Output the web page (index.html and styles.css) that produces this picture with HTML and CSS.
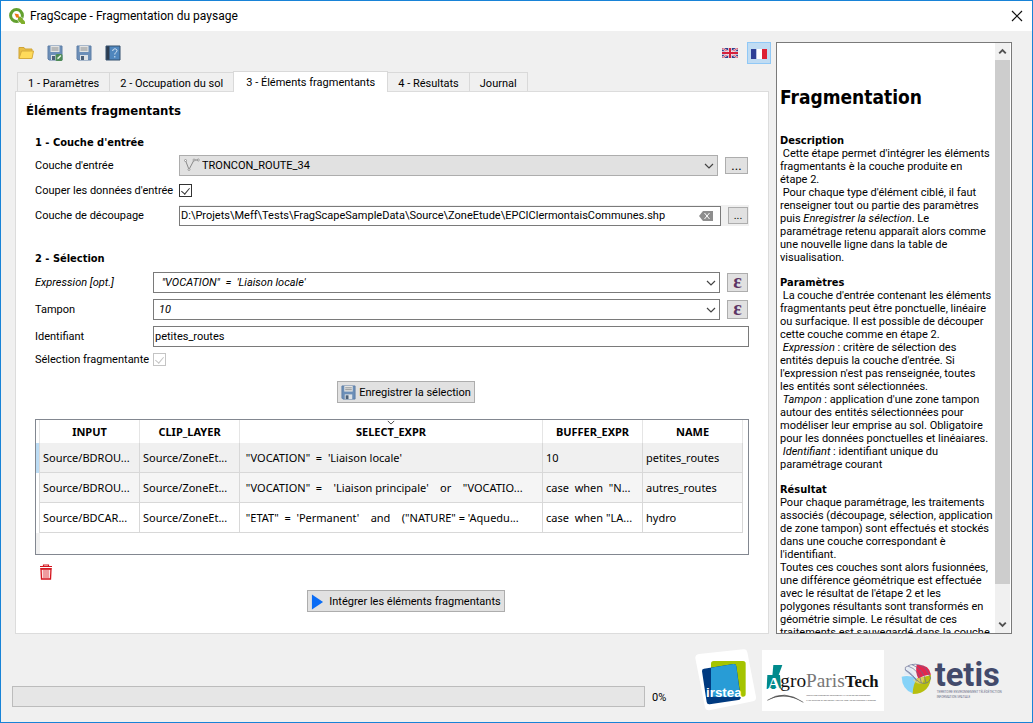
FILE: index.html
```html
<!DOCTYPE html>
<html lang="fr">
<head>
<meta charset="utf-8">
<title>FragScape - Fragmentation du paysage</title>
<link rel="stylesheet" href="styles.css">
</head>
<body>
<svg class="defs" aria-hidden="true">
  <symbol id="disk" viewBox="0 0 16 16">
    <path d="M1 1h14v14H2l-1-1z" fill="#6c8fb8" stroke="#5f7fa6"/>
    <path d="M3.500 1h9v6h-9z" fill="#e4e4e2"/>
    <path d="M4.500 3h7M4.500 5h7" stroke="#8b8f92"/>
    <path d="M4 10h8v5H4z" fill="#dfe3e6"/>
    <path d="M5 11h3v4H5z" fill="#4b6078"/>
  </symbol>
  <symbol id="chevron" viewBox="0 0 10 6">
    <path d="M1 1l4 4 4-4" fill="none" stroke="#444" stroke-width="1.200"/>
  </symbol>
</svg>
<div class="window">
  <header class="titlebar">
    <svg class="app-icon" viewBox="0 0 16 16" aria-hidden="true">
      <circle cx="7.500" cy="7.500" r="5.900" fill="none" stroke="#62a02f" stroke-width="3"/>
      <path d="M9 9l2-.5 5 5V16h-3.500L9 12z" fill="#7fae2b"/>
      <path d="M8.500 12l3 4M11.500 8.500l4.500 3.500" stroke="#fff" stroke-width=".6"/>
      <path d="M5.500 5.500l4 .8.700 3.500-3-.3z" fill="#ee7913"/>
    </svg>
    <span class="title">FragScape - Fragmentation du paysage</span>
    <button class="close" type="button" aria-label="Fermer">
      <svg viewBox="0 0 12 12"><path d="M1 1l10 10M11 1L1 11" stroke="#111" stroke-width="1.200"/></svg>
    </button>
  </header>

  <main class="main">
    <section class="left">
      <div class="toolbar">
        <button class="tool" type="button" aria-label="Ouvrir">
          <svg viewBox="0 0 16 16"><path d="M1 13.500V2.500h5l1 1.500h7v2" fill="#e9bf45" stroke="#d0a436"/><path d="M1 13.500L3.500 6H15.500l-1.500 7.500z" fill="#ffdb5a" stroke="#d5ab3d"/></svg>
        </button>
        <button class="tool" type="button" aria-label="Enregistrer sous">
          <svg viewBox="0 0 16 16"><use href="#disk"/><rect x="8.500" y="9" width="7" height="7" rx="1.500" fill="#4e8b57"/><path d="M10.200 14.300l.5-1.800 2.700-2.500 1 1-2.600 2.700z" fill="#e8f2e8"/></svg>
        </button>
        <button class="tool" type="button" aria-label="Enregistrer">
          <svg viewBox="0 0 16 16"><use href="#disk"/></svg>
        </button>
        <button class="tool" type="button" aria-label="Aide">
          <svg viewBox="0 0 16 16"><path d="M1 1h14v14H1z" fill="#4f86bd"/><path d="M1 1h3.500v14H1z" fill="#2c3c50"/><path d="M1 1h14v14H1z" fill="none" stroke="#34506f"/><path d="M7.700 6c0-3 4.600-2.700 4.300-.2-.2 1.500-2.200 1.700-2.200 3.700M9.800 11v1.500" fill="none" stroke="#dbe8f5" stroke-width="1"/></svg>
        </button>
        <span class="spacer"></span>
        <button class="flag" type="button" aria-label="English">
          <svg viewBox="0 0 32 20"><path d="M0 0h32v20H0z" fill="#34408c"/><path d="M0 0l32 20M32 0L0 20" stroke="#f3e9ee" stroke-width="4"/><path d="M0 0l32 20M32 0L0 20" stroke="#d5203c" stroke-width="1.500"/><path d="M16 0v20M0 10h32" stroke="#f3e9ee" stroke-width="7"/><path d="M16 0v20M0 10h32" stroke="#d5203c" stroke-width="4"/></svg>
        </button>
        <button class="flag flag-on" type="button" aria-label="Français" aria-pressed="true">
          <svg viewBox="0 0 32 20"><path d="M0 0h11v20H0z" fill="#2f4096"/><path d="M11 0h11v20H11z" fill="#fff"/><path d="M22 0h10v20H22z" fill="#dd2033"/></svg>
        </button>
      </div>

      <div class="tabs" role="tablist">
        <button class="tab" role="tab" type="button">1 - Paramètres</button>
        <button class="tab" role="tab" type="button">2 - Occupation du sol</button>
        <button class="tab tab-on" role="tab" type="button" aria-selected="true">3 - Éléments fragmentants</button>
        <button class="tab" role="tab" type="button">4 - Résultats</button>
        <button class="tab" role="tab" type="button">Journal</button>
      </div>

      <div class="panel" role="tabpanel">
        <h1 class="panel-title">Éléments fragmentants</h1>

        <form class="form">
          <h2 class="group-title">1 - Couche d'entrée</h2>
          <div class="row row-input">
            <label for="layer">Couche d'entrée</label>
            <div class="combo combo-grey">
              <svg class="line-icon" viewBox="0 0 16 14" aria-hidden="true"><path d="M1.500 2.500L5 11.500 10 2h4" fill="none" stroke="#888"/><g fill="#fff" stroke="#888" stroke-width=".8"><circle cx="1.500" cy="2.500" r="1"/><circle cx="5" cy="11.500" r="1"/><circle cx="10" cy="2" r="1"/><circle cx="14.300" cy="2" r="1"/></g></svg>
              <select id="layer"><option>TRONCON_ROUTE_34</option></select>
              <svg class="arrow" aria-hidden="true"><use href="#chevron"/></svg>
            </div>
            <button class="btn browse" type="button" aria-label="Parcourir les couches">...</button>
          </div>
          <div class="row row-input">
            <label for="clip">Couper les données d'entrée</label>
            <input class="check" id="clip" type="checkbox" checked>
          </div>
          <div class="row row-input">
            <label for="clip-layer">Couche de découpage</label>
            <div class="file">
              <div class="file-field">
                <input class="text" id="clip-layer" type="text" value="D:\Projets\Meff\Tests\FragScapeSampleData\Source\ZoneEtude\EPCIClermontaisCommunes.shp">
                <button class="clear" type="button" aria-label="Effacer"><svg viewBox="0 0 14 10"><path d="M4 0h10v10H4L0 5z" fill="#8e8e8e"/><path d="M5.500 2l5 6M10.500 2l-5 6" stroke="#fff"/></svg></button>
              </div>
              <button class="btn browse-file" type="button" aria-label="Parcourir les fichiers">...</button>
            </div>
          </div>

          <h2 class="group-title group-second">2 - Sélection</h2>
          <div class="row row-select">
            <label class="optional" for="expr">Expression [opt.]</label>
            <div class="combo combo-expr">
              <select id="expr"><option>&nbsp;"VOCATION"&nbsp; =&nbsp; 'Liaison locale'</option></select>
              <svg class="arrow" aria-hidden="true"><use href="#chevron"/></svg>
            </div>
            <button class="btn epsilon" type="button" aria-label="Éditer l'expression">ε</button>
          </div>
          <div class="row row-select">
            <label for="buffer">Tampon</label>
            <div class="combo combo-expr">
              <select id="buffer"><option>10</option></select>
              <svg class="arrow" aria-hidden="true"><use href="#chevron"/></svg>
            </div>
            <button class="btn epsilon" type="button" aria-label="Éditer le tampon">ε</button>
          </div>
          <div class="row row-select">
            <label for="name">Identifiant</label>
            <input class="text" id="name" type="text" value="petites_routes">
          </div>
          <div class="row row-select row-short">
            <label for="frag">Sélection fragmentante</label>
            <input class="check" id="frag" type="checkbox" checked disabled>
          </div>

          <button class="btn action save" type="button"><svg viewBox="0 0 16 16" aria-hidden="true"><use href="#disk"/></svg>Enregistrer la sélection</button>

          <div class="table-box">
            <table class="table">
              <colgroup><col class="c-head"><col class="c-std"><col class="c-std"><col><col class="c-std"><col class="c-std"></colgroup>
              <thead>
                <tr><td></td><th>INPUT</th><th>CLIP_LAYER</th><th class="sorted">SELECT_EXPR<svg class="sort" aria-hidden="true"><use href="#chevron"/></svg></th><th>BUFFER_EXPR</th><th>NAME</th></tr>
              </thead>
              <tbody>
                <tr class="current"><td class="mark"></td><td>Source/BDROU...</td><td>Source/ZoneEt...</td><td>&nbsp;"VOCATION"&nbsp; =&nbsp; 'Liaison locale'</td><td>10</td><td>petites_routes</td></tr>
                <tr class="alt"><td class="mark"></td><td>Source/BDROU...</td><td>Source/ZoneEt...</td><td>&nbsp;"VOCATION"&nbsp; =&nbsp; &nbsp; 'Liaison principale'&nbsp; &nbsp; or&nbsp; &nbsp; "VOCATIO...</td><td>case&nbsp; when&nbsp; "N...</td><td>autres_routes</td></tr>
                <tr><td class="mark"></td><td>Source/BDCAR...</td><td>Source/ZoneEt...</td><td>&nbsp;"ETAT"&nbsp; =&nbsp; 'Permanent'&nbsp; &nbsp; and&nbsp; &nbsp; ("NATURE" = 'Aquedu...</td><td>case&nbsp; when "LA...</td><td>hydro</td></tr>
              </tbody>
            </table>
          </div>

          <button class="trash" type="button" aria-label="Supprimer">
            <svg viewBox="0 0 14 16"><path d="M4.500 2V1h5v1M1 2.500h12" fill="none" stroke="#d4151e" stroke-width="1.200"/><path d="M2 5h10l-.5 10h-9z" fill="#fde3e3" stroke="#d4151e" stroke-width="1.300"/><path d="M1.300 4.700h11.400" stroke="#d4151e" stroke-width="1.100"/><path d="M5 6v8M7 6v8M9 6v8" stroke="#d4151e" stroke-width=".7"/></svg>
          </button>

          <button class="btn action run" type="button"><svg viewBox="0 0 14 16" aria-hidden="true"><path d="M1 0l12 8-12 8z" fill="#0a6cf5"/></svg>Intégrer les éléments fragmentants</button>
        </form>
      </div>
    </section>

    <aside class="help">
      <div class="help-text">
        <h1>Fragmentation</h1>
        <h2>Description</h2>
        <p>&nbsp;Cette étape permet d'intégrer les éléments fragmentants è la couche produite en<br>étape 2.</p>
        <p>&nbsp;Pour chaque type d'élément ciblé, il faut renseigner tout ou partie des paramètres puis <i>Enregistrer la sélection</i>. Le<br>paramétrage retenu apparaît alors comme<br>une nouvelle ligne dans la table de<br>visualisation.</p>
        <h2>Paramètres</h2>
        <p>&nbsp;La couche d'entrée contenant les éléments fragmentants peut être ponctuelle, linéaire<br>ou surfacique. Il est possible de découper cette couche comme en étape 2.</p>
        <p>&nbsp;<i>Expression</i> : critère de sélection des<br>entités depuis la couche d'entrée. Si<br>l'expression n'est pas renseignée, toutes<br>les entités sont sélectionnées.</p>
        <p>&nbsp;<i>Tampon</i> : application d'une zone tampon autour des entités sélectionnées pour modéliser leur emprise au sol. Obligatoire<br>pour les données ponctuelles et linéaiares.</p>
        <p>&nbsp;<i>Identifiant</i> : identifiant unique du<br>paramétrage courant</p>
        <h2>Résultat</h2>
        <p>Pour chaque paramétrage, les traitements associés (découpage, sélection, application<br>de zone tampon) sont effectués et stockés dans une couche correspondant è<br>l'identifiant.</p>
        <p>Toutes ces couches sont alors fusionnées, une différence géométrique est effectuée<br>avec le résultat de l'étape 2 et les<br>polygones résultants sont transformés en<br>géométrie simple. Le résultat de ces<br>traitements est sauvegardé dans la couche</p>
      </div>
      <div class="scroll" aria-hidden="true">
        <svg viewBox="0 0 16 17"><path d="M4.500 10.500L8 7l3.500 3.500" fill="none" stroke="#505050" stroke-width="2"/></svg>
        <div class="thumb"></div>
        <svg viewBox="0 0 16 17"><path d="M4.500 6.500L8 10l3.500-3.500" fill="none" stroke="#505050" stroke-width="2"/></svg>
      </div>
    </aside>
  </main>

  <footer class="footer">
    <progress class="progress" id="prog" value="0" max="100"></progress>
    <label class="percent" for="prog">0%</label>
    <svg class="logo-irstea" viewBox="45 28 186 186" role="img" aria-label="irstea">
      <path d="M57 43L190 29q10-1 12 9l26 134q1 11-9 13L88 212q-11 1-13-9L46 56q-1-11 11-13z" fill="#fff"/>
      <rect x="93" y="64" width="104" height="107" rx="8" fill="#a5c400"/>
      <path d="M72 87l88-14q8-1 9 7l13 92q1 8-7 9l-86 13q-8 1-9-7L66 95q-1-7 6-8z" fill="#003a80"/>
      <path d="M93 84l67-11q8-1 9 7l12 91H101q-8 0-8-8z" fill="#289cd6"/>
      <text x="78" y="171" class="t-irstea">irstea</text>
    </svg>
    <svg class="logo-agro" viewBox="246 30 366 183" role="img" aria-label="AgroParisTech">
      <path d="M246 30h366v183H246z" fill="#fff"/>
      <path d="M280 75h27l-12 33h-18z" fill="#008a8c"/>
      <path d="M262 105h38l3 42h-43z" fill="#008a8c"/>
      <text x="263" y="147" class="t-a">A</text>
      <text x="301" y="142" class="t-gro">gro</text>
      <text x="378" y="142" class="t-paris">Paris</text>
      <text x="495" y="142" class="t-tech">Tech</text>
      <path d="M262 181q50-34 108 6-56-32-108-6z" fill="#555"/>
      <path d="M262 181q50-34 108 6" fill="none" stroke="#444" stroke-width="2"/>
      <text x="379" y="167" class="t-tiny">INSTITUT DES SCIENCES ET INDUSTRIES DU VIVANT ET DE L'ENVIRONNEMENT</text>
      <text x="379" y="183" class="t-tiny">PARIS INSTITUTE OF TECHNOLOGY FOR LIFE, FOOD AND ENVIRONMENTAL SCIENCES</text>
    </svg>
    <svg class="logo-tetis" viewBox="60 60 306 126" role="img" aria-label="tetis">
      <path d="M65 110q20-6 45 4l-12 46q-32-12-33-50z" fill="#86d3f8"/>
      <path d="M72 104q2-16 16-26l24 36q-20-10-40-10z" fill="#e4ecf5"/>
      <path d="M112 114q26-4 41-10 0 56-55 58 0-28 14-48z" fill="#b7bf10"/>
      <path d="M110 74q38-2 43 30-20 0-38 12-10-20-5-42z" fill="#e2274e"/>
      <path d="M98 120q20-10 36-8l-6 18q-18 4-30-10z" fill="#f2d98c" opacity=".6"/>
      <g fill="none" stroke="#626a92" stroke-width="2"><path d="M76 82q30-20 60 2l16 30q-6 22-32 14L76 90z"/><path d="M84 78q34 12 40 50M96 74q36 14 42 54M76 90q22 10 34 34"/></g>
      <text x="164" y="138" class="t-tetis">tetis</text>
      <text x="170" y="160" class="t-sub">TERRITOIRE ENVIRONNEMENT TÉLÉDÉTECTION</text>
      <text x="170" y="173" class="t-sub">INFORMATION SPATIALE</text>
    </svg>
  </footer>
</div>
</body>
</html>
```
FILE: styles.css
```css
* { box-sizing: border-box; }

body {
  margin: 0;
  color: #000;
  background: #f0f0f0;
  font: 11px/13px Roboto, "Liberation Sans", sans-serif;
}

h1, h2, p { margin: 0; }
h1, h2 { font-family: "DejaVu Sans Condensed", "DejaVu Sans", sans-serif; font-weight: bold; }
h2 { font-size: 11px; line-height: 13px; }
button, input, select { font: inherit; color: inherit; margin: 0; }
button { padding: 0; border: 0; background: none; }
svg { display: block; }
.defs { position: absolute; width: 0; height: 0; }

.window {
  display: flex;
  flex-direction: column;
  height: 100vh;
  min-height: 640px;
  border: 1px solid #1883d7;
}

/* Title bar */
.titlebar {
  display: flex;
  align-items: center;
  gap: 5px;
  height: 30px;
  padding: 0 9px 0 8px;
  background: #fff;
}
.app-icon { width: 16px; height: 16px; }
.title { flex: 1; font-size: 12px; line-height: 16px; }
.close svg { width: 12px; height: 12px; }

.main {
  display: flex;
  flex: 1;
  gap: 5px;
  min-height: 0;
  padding: 11px 20px 0 14px;
}
.left { display: flex; flex: 1; flex-direction: column; min-width: 0; }

/* Toolbar */
.toolbar { display: flex; align-items: center; gap: 13px; height: 22px; padding-left: 3px; }
.tool svg { width: 16px; height: 16px; }
.spacer { flex: 1; }
.flag { padding: 3px; border: 1px solid transparent; }
.flag svg { width: 16px; height: 10px; }
.toolbar .flag { height: 22px; margin-left: -8px; }
.toolbar .flag-on { border-color: #90c8f6; background: #c0dcf3; padding: 5px 3px 3px; }

/* Tabs */
.tabs { display: flex; align-items: flex-end; margin: 7px 0 0 2px; }
.tab {
  height: 19px;
  padding: 2px 10px 0;
  border: 1px solid #d9d9d9;
  border-left-width: 0;
  border-bottom: 0;
  background: #f0f0f0;
}
.tab:first-child { border-left-width: 1px; }
.tab-on { position: relative; height: 21px; margin: 0 0 -1px -1px; padding: 0 12px; border-left-width: 1px; background: #fff; }
.panel {
  flex: 1;
  margin-right: 2px;
  padding: 11px 19px 0;
  border: 1px solid #dcdcdc;
  background: #fff;
}
.panel-title { margin-left: -9px; font-size: 13px; line-height: 16px; }

/* Form */
.form { display: flex; flex-direction: column; }
.group-title { margin: 17px 0 4px; }
.group-second { margin-top: 24px; }
.row { display: grid; align-items: center; height: 25px; }
.row-input { grid-template-columns: 144px 1fr auto; }
.row-select { grid-template-columns: 118px 1fr auto; height: 27px; }
.row-short { height: 18px; }
.optional { font-style: italic; }

.combo { position: relative; display: flex; height: 21px; }
.combo select {
  flex: 1;
  min-width: 0;
  padding: 0 20px 0 4px;
  border: 1px solid #7a7a7a;
  border-radius: 0;
  background: #fff;
  appearance: none;
}
.combo-grey select { padding-left: 22px; border-color: #adadad; background: #e1e1e1; }
.combo-expr select { padding-left: 5px; font-style: italic; }
.arrow { position: absolute; top: 8px; right: 4px; width: 10px; height: 6px; pointer-events: none; }
.line-icon { position: absolute; top: 3px; left: 5px; width: 16px; height: 14px; pointer-events: none; }

.text {
  width: 100%;
  height: 21px;
  padding: 0 1px;
  border: 1px solid #7a7a7a;
  background: #fff;
}
.file { display: flex; grid-column: 2 / 4; align-items: center; gap: 7px; height: 21px; padding-right: 1px; background: #f0f0f0; }
.file-field { position: relative; flex: 1; }
.file-field .text { display: block; height: 20px; }
.clear { position: absolute; top: 5px; right: 8px; }
.clear svg { width: 14px; height: 10px; }

.btn { border: 1px solid #adadad; background: #e1e1e1; }
.browse { width: 23px; height: 17px; margin: 0 1px 0 7px; font-size: 13px; line-height: 13px; }
.browse-file { width: 20px; height: 17px; }
.epsilon {
  width: 21px;
  height: 19px;
  margin: 0 1px 0 7px;
  padding-bottom: 2px;
  color: #5d3565;
  font: bold 20px/15px "Liberation Serif", serif;
}
.row-select > .text { grid-column: 2 / 4; }

.check {
  position: relative;
  width: 13px;
  height: 13px;
  border: 1px solid #333;
  background: #fff;
  appearance: none;
}
.check:checked::after {
  position: absolute;
  top: 1px;
  left: 3px;
  width: 4px;
  height: 7px;
  border: solid #333;
  border-width: 0 1px 1px 0;
  content: "";
  transform: rotate(40deg);
}
.check:disabled, .check:disabled::after { border-color: #c4c4c4; }

.action { display: flex; align-items: center; align-self: center; height: 22px; padding: 1px 3px 0; }
.save { gap: 3px; margin: 13px 0 16px 28px; }
.save svg { width: 15px; height: 15px; }
.run { gap: 5px; margin: 10px 0 0 28px; }
.run svg { width: 13px; height: 16px; }
.trash { align-self: flex-start; margin: 9px 0 0 4px; }
.trash svg { width: 14px; height: 16px; }

/* Selections table */
.table-box {
  height: 136px;
  padding-right: 5px;
  border: 1px solid #828790;
  background: linear-gradient(#f0f0f0, #f0f0f0) left / 4px 100% no-repeat #fff;
}
.table {
  width: 100%;
  border-spacing: 0;
  table-layout: fixed;
  font: 11px/16px "Noto Sans", sans-serif;
}
.c-head { width: 4px; }
.c-std { width: 100px; }
.table th, .table td {
  height: 30px;
  padding: 0 0 0 3px;
  overflow: hidden;
  border-right: 1px solid #d8d8d8;
  border-bottom: 1px solid #d8d8d8;
  background: #fff;
  white-space: nowrap;
}
.table thead th, .table thead td { height: 23px; padding: 0; border-bottom: 0; border-color: #e5e5e5; }
.table .mark { padding: 0; border-bottom: 0; }
.table .current td { background: #f0f0f0; }
.table .alt td { background: #f5f5f5; }
.table .current .mark { background: #bcdcf4; }
.table .alt .mark { background: #fff; }
.sorted { position: relative; }
.sort { position: absolute; top: 0; left: 50%; width: 8px; height: 5px; margin-left: -4px; }

/* Help */
.help { display: flex; width: 236px; border: 1px solid #7a7a7a; background: #fff; }
.help-text { flex: 1; overflow: hidden; padding: 42px 0 0 3px; }
.help-text h1 { margin-bottom: 25px; font-size: 19px; line-height: 24px; }
.help-text p + h2 { margin-top: 12px; }
.scroll { display: flex; flex-direction: column; justify-content: space-between; width: 15px; margin-right: 1px; background: #f0f0f0; }
.scroll svg { width: 15px; height: 17px; }
.thumb { flex: 1; margin-bottom: 32px; background: #cdcdcd; }

/* Footer */
.footer { display: flex; align-items: flex-end; padding: 15px 30px 11px 11px; }
.progress {
  flex: 1;
  height: 21px;
  margin-bottom: 4px;
  border: 1px solid #bcbcbc;
  background: #e6e6e6;
  appearance: none;
}
.progress::-webkit-progress-bar { background: #e6e6e6; }
.percent { width: 50px; margin-bottom: 7px; padding-left: 7px; }
.logo-irstea { width: 62px; height: 62px; }
.logo-agro { width: 122px; height: 61px; margin-left: 5px; }
.logo-tetis { width: 102px; height: 42px; margin: 0 0 9px 16px; overflow: visible; }

.t-irstea { fill: #fff; font: bold 40px "Liberation Sans", sans-serif; }
.t-a { fill: #fff; font: bold 52px "Liberation Serif", serif; }
.t-gro { fill: #111; font: 58px "Liberation Serif", serif; }
.t-paris { fill: #777; font: 58px "Liberation Serif", serif; }
.t-tech { fill: #111; font: bold 50px "Liberation Serif", serif; }
.t-tiny { fill: #444; font: 5px "Liberation Sans", sans-serif; }
.t-tetis { fill: #424a6b; font: bold 98px Roboto, sans-serif; }
.t-sub { fill: #6a6f88; font: 9px Roboto, sans-serif; }
```
